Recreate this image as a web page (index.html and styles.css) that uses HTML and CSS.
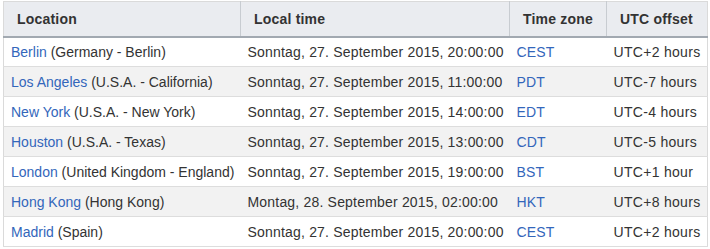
FILE: index.html
```html
<!DOCTYPE html>
<html>
<head>
<meta charset="utf-8">
<link rel="stylesheet" href="styles.css">
</head>
<body>
<div class="wrap">
<table class="tz">
  <colgroup>
    <col class="c1"><col class="c2"><col class="c3"><col class="c4">
  </colgroup>
  <thead>
    <tr><th>Location</th><th>Local time</th><th>Time zone</th><th>UTC offset</th></tr>
  </thead>
  <tbody>
    <tr><td class="loc"><a href="#">Berlin</a> (Germany - Berlin)</td><td>Sonntag, 27. September 2015, 20:00:00</td><td><a href="#">CEST</a></td><td class="off">UTC+2 hours</td></tr>
    <tr><td class="loc"><a href="#">Los Angeles</a> (U.S.A. - California)</td><td>Sonntag, 27. September 2015, 11:00:00</td><td><a href="#">PDT</a></td><td class="off">UTC-7 hours</td></tr>
    <tr><td class="loc"><a href="#">New York</a> (U.S.A. - New York)</td><td>Sonntag, 27. September 2015, 14:00:00</td><td><a href="#">EDT</a></td><td class="off">UTC-4 hours</td></tr>
    <tr><td class="loc"><a href="#">Houston</a> (U.S.A. - Texas)</td><td>Sonntag, 27. September 2015, 13:00:00</td><td><a href="#">CDT</a></td><td class="off">UTC-5 hours</td></tr>
    <tr><td class="loc"><a href="#">London</a> (United Kingdom - England)</td><td>Sonntag, 27. September 2015, 19:00:00</td><td><a href="#">BST</a></td><td class="off">UTC+1 hour</td></tr>
    <tr><td class="loc"><a href="#">Hong Kong</a> (Hong Kong)</td><td>Montag, 28. September 2015, 02:00:00</td><td><a href="#">HKT</a></td><td class="off">UTC+8 hours</td></tr>
    <tr><td class="loc"><a href="#">Madrid</a> (Spain)</td><td>Sonntag, 27. September 2015, 20:00:00</td><td><a href="#">CEST</a></td><td class="off">UTC+2 hours</td></tr>
  </tbody>
</table>
</div>
</body>
</html>
```
FILE: styles.css
```css
html, body {
  margin: 0;
  padding: 0;
  background: #ffffff;
}
.wrap {
  padding: 1px 3px 0 3px;
}
.tz {
  border-collapse: collapse;
  table-layout: fixed;
  width: 704px;
  font-family: "Liberation Sans", Arial, sans-serif;
  font-size: 14px;
  color: #333333;
  border: 1px solid #dadada;
}
.c1 { width: 237px; }
.c2 { width: 269px; }
.c3 { width: 97px; }
.c4 { width: 101px; }
.tz th {
  background: #eaecf0;
  font-weight: bold;
  text-align: left;
  height: 35px;
  padding: 0 0 0 13px;
  letter-spacing: 0.2px;
  border-left: 1px solid #c8ccd1;
  border-bottom: 2px solid #a2a9b1;
  box-sizing: border-box;
  white-space: nowrap;
}
.tz th:first-child { border-left: 1px solid #dadada; }
.tz td {
  height: 30px;
  padding: 0 0 0 7px;
  letter-spacing: 0.19px;
  border-bottom: 1px solid #dddddd;
  white-space: nowrap;
  box-sizing: border-box;
}
.tz td.loc { letter-spacing: 0; }
.tz td.off { letter-spacing: 0.3px; }
.tz tbody tr:nth-child(even) td {
  background: #f2f2f2;
}
.tz a {
  color: #3366bb;
  text-decoration: none;
}
```
